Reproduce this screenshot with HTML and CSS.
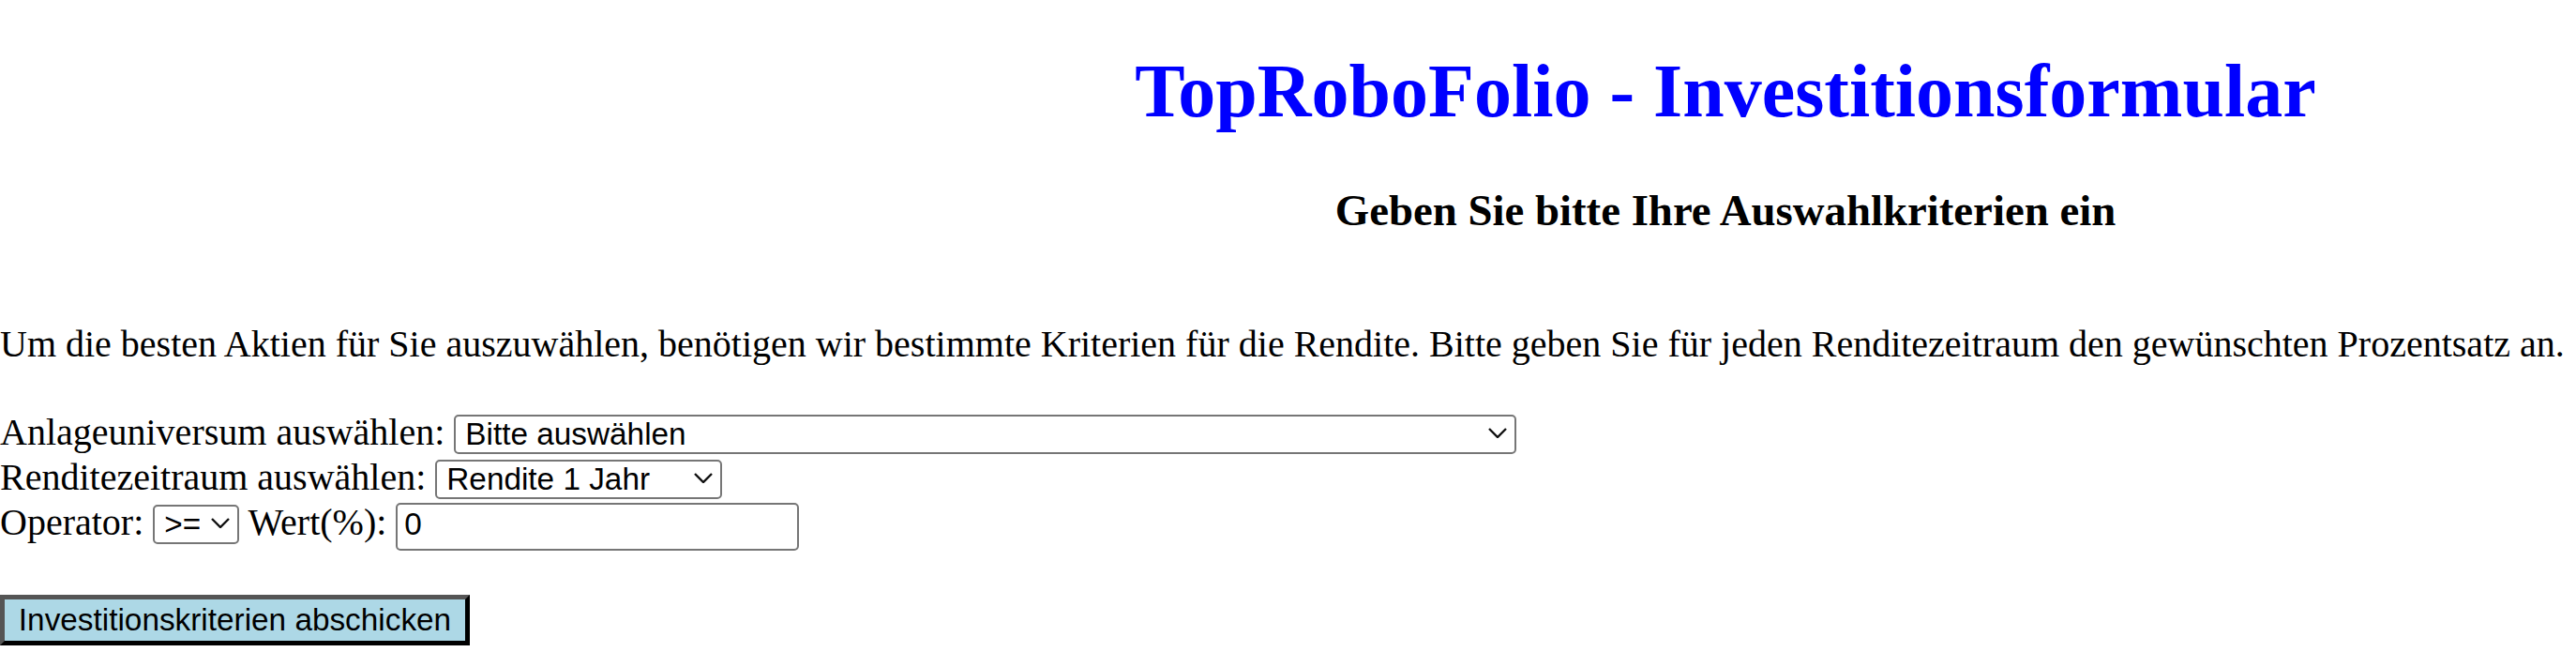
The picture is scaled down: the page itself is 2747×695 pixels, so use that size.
FILE: index.html
```html
<!DOCTYPE html>
<html lang="de">
<head>
    <meta charset="UTF-8">
    <meta name="viewport" content="width=device-width, initial-scale=1.0">
    <title>TopRoboFolio - Investitionsformular</title>
    <link rel="stylesheet" href="styles.css">
</head>
<body>
    <div class="header">
        <h1>TopRoboFolio - Investitionsformular</h1>
        <h3>Geben Sie bitte Ihre Auswahlkriterien ein</h3>
    </div>

    <p class="intro">Um die besten Aktien für Sie auszuwählen, benötigen wir bestimmte Kriterien für die Rendite. Bitte geben Sie für jeden Renditezeitraum den gewünschten Prozentsatz an.</p>

    <form class="criteria-form" onsubmit="return false;">
        <div class="row">
            <label for="universe">Anlageuniversum auswählen:</label>
            <span class="pick">
                <select id="universe" class="sel-universe">
                    <option>Bitte auswählen</option>
                </select>
                <svg class="chevron" viewBox="0 0 20 11" width="20" height="11"><polyline points="1,1 10,10 19,1" /></svg>
            </span>
        </div>
        <div class="row">
            <label for="period">Renditezeitraum auswählen:</label>
            <span class="pick">
                <select id="period" class="sel-period">
                    <option>Rendite 1 Jahr</option>
                    <option>Rendite 3 Jahre</option>
                    <option>Rendite 5 Jahre</option>
                </select>
                <svg class="chevron" viewBox="0 0 20 11" width="20" height="11"><polyline points="1,1 10,10 19,1" /></svg>
            </span>
        </div>
        <div class="row">
            <label for="operator">Operator:</label>
            <span class="pick">
                <select id="operator" class="sel-operator">
                    <option>&gt;=</option>
                    <option>&lt;=</option>
                </select>
                <svg class="chevron" viewBox="0 0 20 11" width="20" height="11"><polyline points="1,1 10,10 19,1" /></svg>
            </span>
            <label for="value">Wert(%):</label>
            <input type="text" id="value" class="value-input" value="0">
        </div>

        <button type="submit" class="submit-btn">Investitionskriterien abschicken</button>
    </form>
</body>
</html>
```

FILE: styles.css
```css
body {
    margin: 0;
    font-family: "Liberation Serif", "Times New Roman", serif;
    font-size: 40px;
    color: #000;
    background: #fff;
}

.header {
    text-align: center;
    padding-left: 933px;
}

.header h1 {
    margin: 52px 0 0;
    font-size: 80px;
    color: #0000ff;
}

.header h3 {
    margin: 54px 0 0;
    font-size: 46.8px;
}

.intro {
    margin: 92px 0 47px;
    white-space: nowrap;
}

.row {
    line-height: 48px;
    white-space: nowrap;
}

.pick {
    position: relative;
    display: inline-block;
}

select,
input,
button {
    font-family: "Liberation Sans", Arial, sans-serif;
    font-size: 33.33px;
    line-height: normal;
    color: #000;
    margin: 0;
}

select {
    -webkit-appearance: none;
    appearance: none;
    background: #fff;
    border: 2px solid #767676;
    border-radius: 5px;
    padding: 0 40px 0 10px;
    height: 42px;
    box-sizing: border-box;
    vertical-align: baseline;
}

.sel-universe { width: 1133px; }
.sel-period { width: 306px; }
.sel-operator { width: 92px; }

.chevron {
    position: absolute;
    right: 10px;
    top: 50%;
    margin-top: -5px;
    pointer-events: none;
    fill: none;
    stroke: #111;
    stroke-width: 2.4;
}

.value-input {
    width: 430px;
    height: 51px;
    box-sizing: border-box;
    border: 2px solid #767676;
    border-radius: 5px;
    padding: 2px 7px 6px;
    background: #fff;
}

.submit-btn {
    display: block;
    margin-top: 47px;
    width: 501px;
    height: 54px;
    box-sizing: border-box;
    padding: 0;
    background: #add8e6;
    border: 5px solid;
    border-color: #555 #000 #000 #555;
    text-align: center;
    white-space: nowrap;
    cursor: pointer;
}
```
